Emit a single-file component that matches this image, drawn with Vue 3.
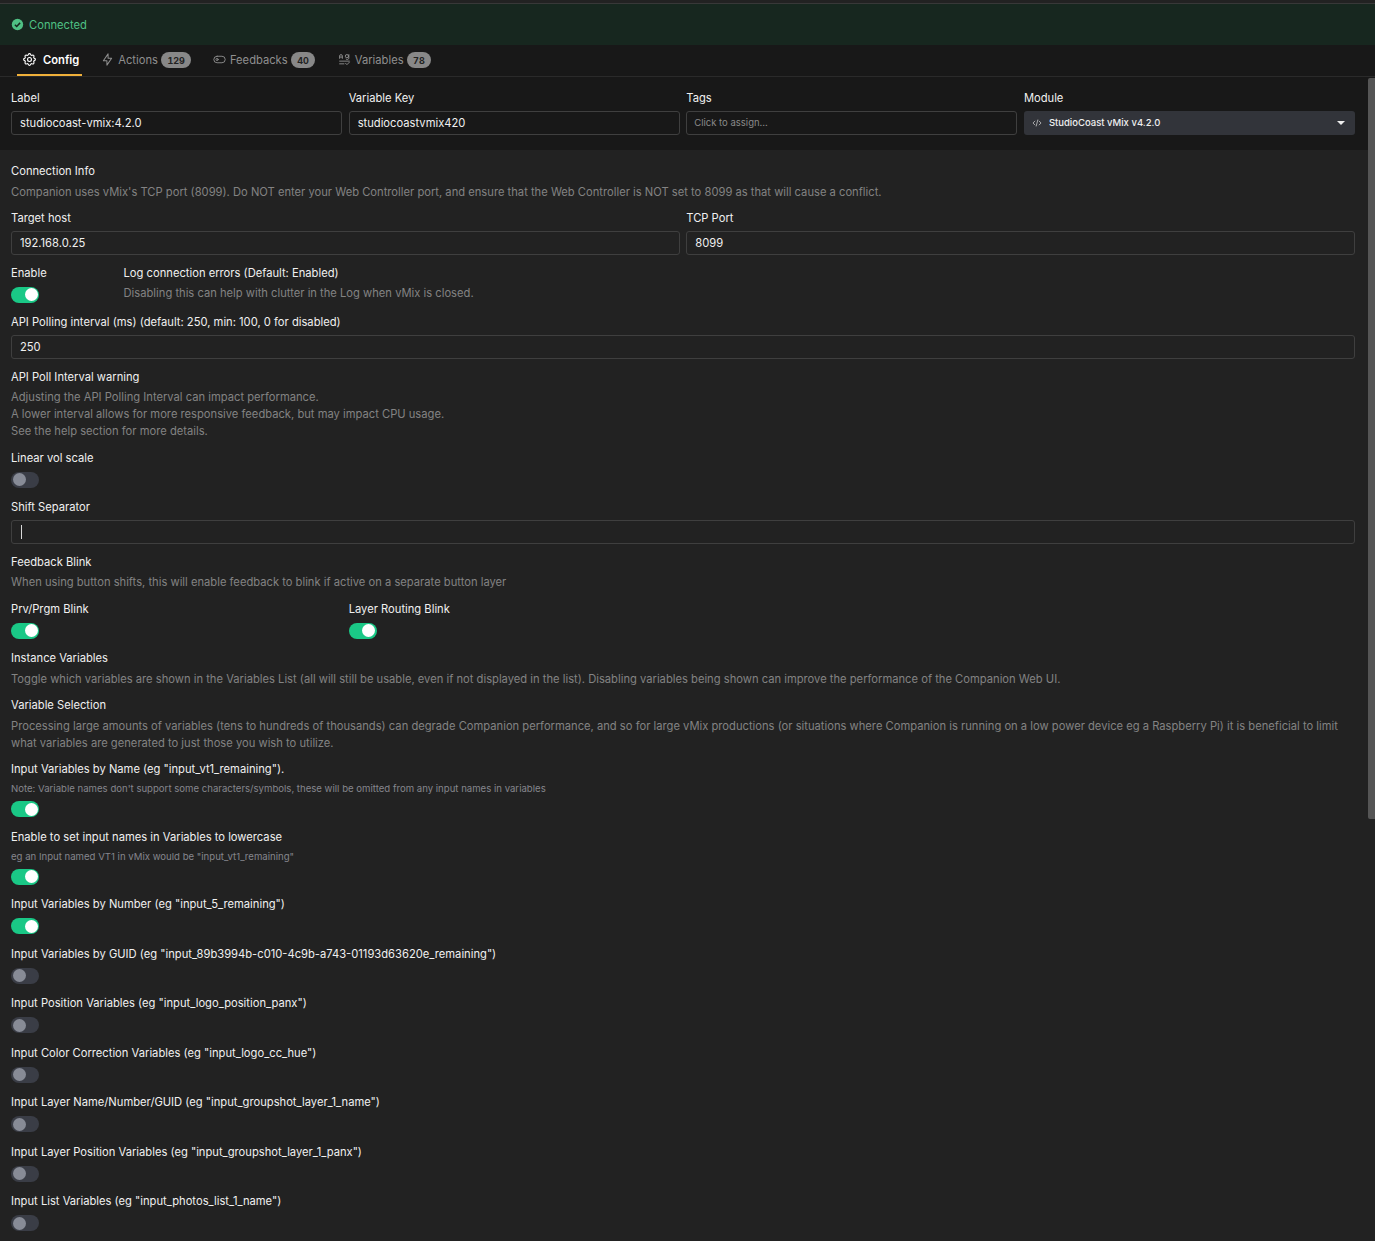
<script setup>
import { ref } from 'vue';

const tabs = ref([
  { id: 'config', name: 'Config' },
  { id: 'actions', name: 'Actions', count: 129 },
  { id: 'feedbacks', name: 'Feedbacks', count: 40 },
  { id: 'variables', name: 'Variables', count: 78 }
]);

const varToggles = ref([
  { label: 'Input Variables by Name (eg "input_vt1_remaining").', note: "Note: Variable names don't support some characters/symbols, these will be omitted from any input names in variables", on: true },
  { label: 'Enable to set input names in Variables to lowercase', note: 'eg an Input named VT1 in vMix would be "input_vt1_remaining"', on: true },
  { label: 'Input Variables by Number (eg "input_5_remaining")', on: true },
  { label: 'Input Variables by GUID (eg "input_89b3994b-c010-4c9b-a743-01193d63620e_remaining")', on: false },
  { label: 'Input Position Variables (eg "input_logo_position_panx")', on: false },
  { label: 'Input Color Correction Variables (eg "input_logo_cc_hue")', on: false },
  { label: 'Input Layer Name/Number/GUID (eg "input_groupshot_layer_1_name")', on: false },
  { label: 'Input Layer Position Variables (eg "input_groupshot_layer_1_panx")', on: false },
  { label: 'Input List Variables (eg "input_photos_list_1_name")', on: false }
]);
</script>

<template>
  <div class="page">
    <div class="status">
      <svg class="status-icon" viewBox="0 0 16 16">
        <circle cx="8" cy="8" r="7" fill="#4fc184" />
        <path d="M4.8 8.2l2.2 2.2L11.2 6" fill="none" stroke="#17271f" stroke-width="1.8" />
      </svg>
      <span>Connected</span>
    </div>

    <nav class="tabs">
      <div v-for="tab in tabs" :key="tab.id" class="tab" :class="{ active: tab.id === 'config' }">
        <svg v-if="tab.id === 'config'" class="tab-icon" viewBox="2 2 20 20">
          <path d="M10.3 4.3c.4-1.8 3-1.8 3.4 0a1.7 1.7 0 0 0 2.6 1.1c1.5-.9 3.3.8 2.4 2.4a1.7 1.7 0 0 0 1 2.5c1.8.4 1.8 3 0 3.4a1.7 1.7 0 0 0-1 2.6c.9 1.5-.9 3.3-2.4 2.4a1.7 1.7 0 0 0-2.6 1c-.4 1.8-3 1.8-3.4 0a1.7 1.7 0 0 0-2.6-1c-1.5.9-3.3-.9-2.4-2.4a1.7 1.7 0 0 0-1-2.6c-1.8-.4-1.8-3 0-3.4a1.7 1.7 0 0 0 1-2.5c-.9-1.6.9-3.3 2.4-2.4a1.7 1.7 0 0 0 2.6-1.1z" />
          <circle cx="12" cy="12" r="3" />
        </svg>
        <svg v-else-if="tab.id === 'actions'" class="tab-icon" viewBox="2 1 20 22">
          <path d="M13 2.5v7.5h6l-8 11.5V14H5z" />
        </svg>
        <svg v-else-if="tab.id === 'feedbacks'" class="tab-icon" viewBox="0 0 24 24">
          <rect x="1.5" y="6" width="21" height="12" rx="6" />
          <circle cx="7.5" cy="12" r="2" />
        </svg>
        <svg v-else class="tab-icon" viewBox="0 0 24 24">
          <path d="M3 10V5.5a2.5 2.5 0 0 1 5 0V10M3 7.5h5M20 3v6.5a3 3 0 0 1-5 1.8M3 15h18M3 20h8M14 19l2.5 2.5L21 17" />
          <circle cx="16.5" cy="5.8" r="3" />
        </svg>
        <span>{{ tab.name }}</span>
        <span v-if="tab.count" class="badge">{{ tab.count }}</span>
      </div>
    </nav>

    <div class="scroll">
      <div class="scroll-thumb"></div>

      <header class="head grid">
        <div class="span3">
          <label>Label</label>
          <input class="text" readonly value="studiocoast-vmix:4.2.0" />
        </div>
        <div class="span3">
          <label>Variable Key</label>
          <input class="text" readonly value="studiocoastvmix420" />
        </div>
        <div class="span3">
          <label>Tags</label>
          <div class="text tags">Click to assign...</div>
        </div>
        <div class="span3">
          <label>Module</label>
          <div class="select">
            <svg class="code-icon" viewBox="0 0 16 16">
              <path d="M5 4.5L1.5 8 5 11.5M11 4.5L14.5 8 11 11.5M9.4 2.5l-2.8 11" />
            </svg>
            <span>StudioCoast vMix v4.2.0</span>
            <i class="caret"></i>
          </div>
        </div>
      </header>

      <section class="form grid">
        <div class="span12">
          <label>Connection Info</label>
          <p>Companion uses vMix's TCP port (8099). Do NOT enter your Web Controller port, and ensure that the Web Controller is NOT set to 8099 as that will cause a conflict.</p>
        </div>
        <div class="span6">
          <label>Target host</label>
          <input class="text" readonly value="192.168.0.25" />
        </div>
        <div class="span6">
          <label>TCP Port</label>
          <input class="text" readonly value="8099" />
        </div>
        <div class="span1 tfield">
          <label>Enable</label>
          <div class="toggle on"></div>
        </div>
        <div class="span11">
          <label>Log connection errors (Default: Enabled)</label>
          <p>Disabling this can help with clutter in the Log when vMix is closed.</p>
        </div>
        <div class="span12">
          <label>API Polling interval (ms) (default: 250, min: 100, 0 for disabled)</label>
          <input class="text" readonly value="250" />
        </div>
        <div class="span12">
          <label>API Poll Interval warning</label>
          <p>Adjusting the API Polling Interval can impact performance.<br />A lower interval allows for more responsive feedback, but may impact CPU usage.<br />See the help section for more details.</p>
        </div>
        <div class="span12 tfield">
          <label>Linear vol scale</label>
          <div class="toggle"></div>
        </div>
        <div class="span12">
          <label>Shift Separator</label>
          <div class="text cursor-box"><i class="cursor"></i></div>
        </div>
        <div class="span12">
          <label>Feedback Blink</label>
          <p>When using button shifts, this will enable feedback to blink if active on a separate button layer</p>
        </div>
        <div class="span3 tfield">
          <label>Prv/Prgm Blink</label>
          <div class="toggle on"></div>
        </div>
        <div class="span9 tfield">
          <label>Layer Routing Blink</label>
          <div class="toggle on"></div>
        </div>
        <div class="span12">
          <label>Instance Variables</label>
          <p>Toggle which variables are shown in the Variables List (all will still be usable, even if not displayed in the list). Disabling variables being shown can improve the performance of the Companion Web UI.</p>
        </div>
        <div class="span12">
          <label>Variable Selection</label>
          <p>Processing large amounts of variables (tens to hundreds of thousands) can degrade Companion performance, and so for large vMix productions (or situations where Companion is running on a low power device eg a Raspberry Pi) it is beneficial to limit what variables are generated to just those you wish to utilize.</p>
        </div>
        <div v-for="item in varToggles" :key="item.label" class="span12 tfield">
          <label>{{ item.label }}</label>
          <small v-if="item.note">{{ item.note }}</small>
          <div class="toggle" :class="{ on: item.on }"></div>
        </div>
      </section>
    </div>
  </div>
</template>

<style>
html, body {
  background: #222222;
}
</style>

<style scoped>
.page {
  height: 1241px;
  overflow: hidden;
  display: flex;
  flex-direction: column;
  font-family: Inter, "Liberation Sans", sans-serif;
  font-size: 11.2px;
  line-height: 18px;
  color: #f0f0f0;
  background: #222222;
}
.status {
  height: 41px;
  flex: none;
  margin-top: 3px;
  border-top: 1px solid #383838;
  display: flex;
  align-items: center;
  gap: 5px;
  padding-left: 11px;
  background: #17271f;
  color: #4fc184;
}
.status-icon {
  width: 13px;
  height: 13px;
}
.tabs {
  flex: none;
  height: 31px;
  padding-left: 17px;
  display: flex;
  gap: 22px;
  background: #181818;
  border-bottom: 1px solid #2a2a2a;
}
.tab {
  display: flex;
  align-items: center;
  gap: 4px;
  color: #8f8f8f;
  height: 31px;
  box-sizing: border-box;
  padding-bottom: 2px;
}
.tab:last-child {
  margin-left: 1px;
}
.tab.active {
  color: #fff;
  font-weight: 600;
  gap: 7px;
  margin-right: -3px;
  padding: 0 3px 0 6px;
  border-bottom: 2px solid #f0b03a;
}
.tab-icon {
  width: 13px;
  height: 13px;
  fill: none;
  stroke: currentColor;
  stroke-width: 1.7;
  stroke-linecap: round;
  stroke-linejoin: round;
}
.badge {
  padding: 0 6px;
  height: 16px;
  line-height: 17px;
  border-radius: 8px;
  background: #888888;
  color: #222;
  font-size: 9px;
  font-weight: 700;
  font-variant-numeric: tabular-nums;
  margin-left: -0.5px;
}
.scroll {
  position: relative;
  flex: 1;
  min-height: 0;
  overflow: hidden;
}
.scroll-thumb {
  position: absolute;
  top: 1px;
  right: 0;
  width: 7px;
  height: 741px;
  background: #555555;
  border-radius: 2px 0 0 2px;
}
.grid {
  display: grid;
  grid-template-columns: repeat(12, 1fr);
  column-gap: 6.5px;
  row-gap: 8.5px;
  padding-left: 11px;
  padding-right: 20px;
}
.head {
  background: #181818;
  padding-top: 12px;
  padding-bottom: 15px;
}
.form {
  padding-top: 12px;
  padding-bottom: 30px;
}
.span1 { grid-column: span 1; }
.span3 { grid-column: span 3; }
.span6 { grid-column: span 6; }
.span9 { grid-column: span 9; }
.span11 { grid-column: span 11; }
.span12 { grid-column: span 12; }
label {
  display: block;
  margin-bottom: 4px;
  color: #f0f0f0;
}
p {
  margin: -0.5px 0 0;
  line-height: 17px;
  color: #838383;
}
small {
  display: block;
  margin: 3px 0 1.5px;
  font-size: 9.6px;
  line-height: 15px;
  color: #85868d;
}
.text {
  display: block;
  width: 100%;
  height: 24px;
  box-sizing: border-box;
  padding: 0 8px;
  background: transparent;
  border: 1px solid #3f3f3f;
  border-radius: 3px;
  outline: none;
  font: inherit;
  color: #f0f0f0;
}
.tags {
  display: flex;
  align-items: center;
  padding-left: 7px;
  font-size: 9.5px;
  color: #8a8a8a;
}
.cursor-box {
  display: flex;
  align-items: center;
}
.cursor {
  width: 1px;
  height: 14px;
  margin-left: 1px;
  background: #d8d8d8;
}
.select {
  height: 24px;
  display: flex;
  align-items: center;
  gap: 7px;
  padding: 0 10px 0 8px;
  border-radius: 3px;
  background: #32343a;
  font-size: 9.5px;
  font-weight: 500;
  color: #efefef;
}
.code-icon {
  width: 10px;
  height: 10px;
  fill: none;
  stroke: #cfcfcf;
  stroke-width: 1.2;
}
.caret {
  margin-left: auto;
  width: 0;
  height: 0;
  border-left: 4px solid transparent;
  border-right: 4px solid transparent;
  border-top: 4px solid #eee;
}
.toggle {
  position: relative;
  width: 28px;
  height: 16px;
  margin: 5px 0 2px;
  border-radius: 8px;
  background: #3a3d46;
}
.toggle::after {
  content: "";
  position: absolute;
  top: 1.5px;
  left: 2px;
  width: 13px;
  height: 13px;
  border-radius: 50%;
  background: #878b96;
}
.toggle.on {
  background: #1ac886;
}
.toggle.on::after {
  left: 13.5px;
  background: #fff;
}
.tfield label {
  margin-bottom: 0;
}
</style>
